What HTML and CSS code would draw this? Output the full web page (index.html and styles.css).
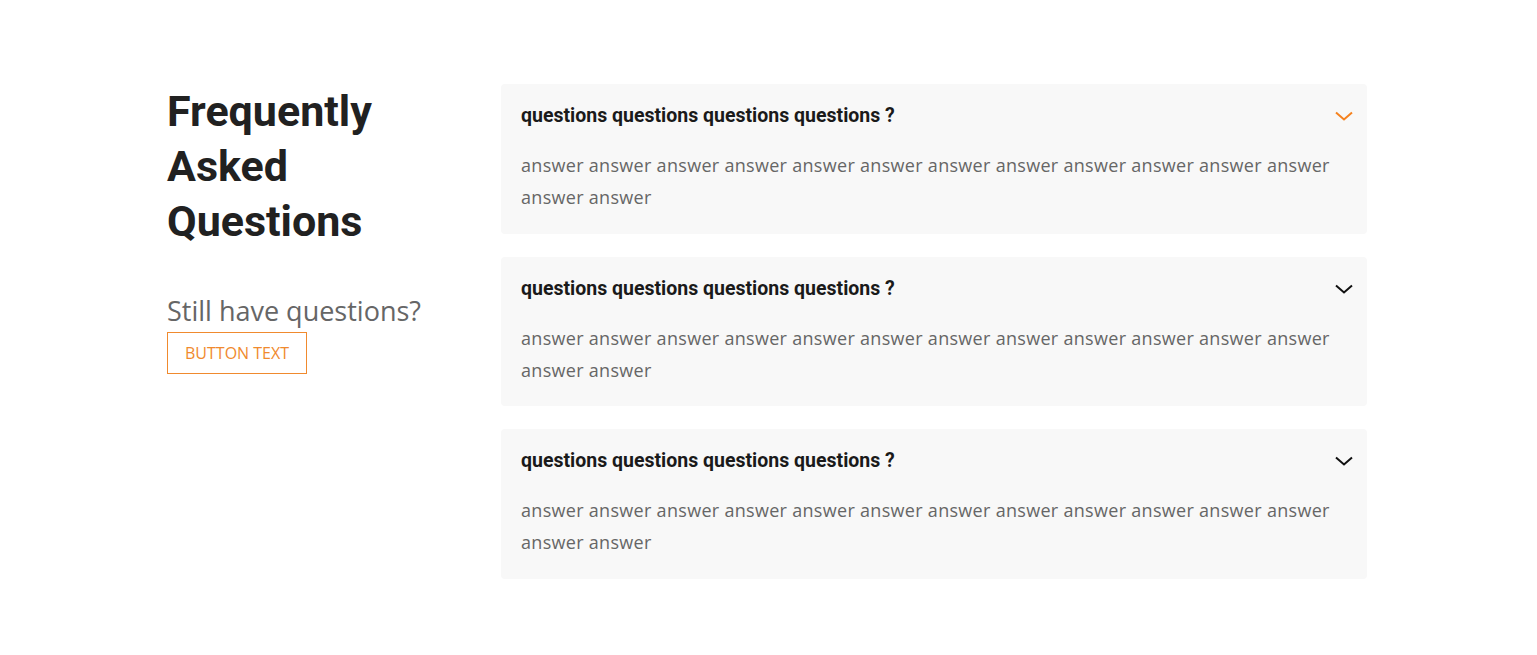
FILE: index.html
```html
<!DOCTYPE html>
<html lang="en">
<head>
<meta charset="utf-8">
<title>FAQ</title>
<link rel="stylesheet" href="styles.css">
</head>
<body>
<section class="faq">
  <div class="faq-intro">
    <h1 class="faq-title">Frequently Asked Questions</h1>
    <p class="faq-still">Still have questions?</p>
    <a class="faq-button" href="#">BUTTON TEXT</a>
  </div>
  <div class="faq-list">
    <div class="faq-item">
      <div class="faq-q">
        <span>questions questions questions questions ?</span>
        <svg class="chev chev-active" width="18" height="10" viewBox="0 0 18 10"><path d="M1 1.5 L9 8.5 L17 1.5" fill="none" stroke="currentColor" stroke-width="2"/></svg>
      </div>
      <p class="faq-a">answer answer answer answer answer answer answer answer answer answer answer answer answer answer</p>
    </div>
    <div class="faq-item">
      <div class="faq-q">
        <span>questions questions questions questions ?</span>
        <svg class="chev" width="18" height="10" viewBox="0 0 18 10"><path d="M1 1.5 L9 8.5 L17 1.5" fill="none" stroke="currentColor" stroke-width="2"/></svg>
      </div>
      <p class="faq-a">answer answer answer answer answer answer answer answer answer answer answer answer answer answer</p>
    </div>
    <div class="faq-item">
      <div class="faq-q">
        <span>questions questions questions questions ?</span>
        <svg class="chev" width="18" height="10" viewBox="0 0 18 10"><path d="M1 1.5 L9 8.5 L17 1.5" fill="none" stroke="currentColor" stroke-width="2"/></svg>
      </div>
      <p class="faq-a">answer answer answer answer answer answer answer answer answer answer answer answer answer answer</p>
    </div>
  </div>
</section>
</body>
</html>
```

FILE: styles.css
```css
html, body {
  margin: 0;
  padding: 0;
  background: #ffffff;
}

.faq {
  width: 1203px;
  margin: 0 auto;
  padding-top: 84px;
  display: grid;
  grid-template-columns: 334px 866px;
}

.faq-title {
  margin: 0;
  font-family: Roboto, "Liberation Sans", sans-serif;
  font-weight: 700;
  font-size: 43px;
  line-height: 55px;
  color: #212121;
  width: 250px;
}

.faq-still {
  margin: 47px 0 6px;
  font-family: "Open Sans", "Noto Sans", sans-serif;
  font-size: 27px;
  line-height: 30px;
  color: #666666;
}

.faq-button {
  display: inline-block;
  box-sizing: border-box;
  height: 42px;
  padding: 0 17px;
  border: 1px solid #f08a2e;
  color: #f08a2e;
  font-family: "Open Sans", "Noto Sans", sans-serif;
  font-size: 16px;
  line-height: 40px;
  text-decoration: none;
}

.faq-list {
  display: flex;
  flex-direction: column;
  gap: 23px;
}

.faq-item {
  background: #f8f8f8;
  padding: 21px 14px 20.5px 20px;
  border-radius: 4px;
}

.faq-q {
  display: flex;
  justify-content: space-between;
  align-items: center;
  font-family: Roboto, "Liberation Sans", sans-serif;
  font-weight: 700;
  font-size: 19.5px;
  line-height: 22px;
  color: #1a1a1a;
}

.chev {
  color: #111111;
}

.chev-active {
  color: #f5821f;
}

.faq-a {
  margin: 22px 0 0;
  font-family: "Open Sans", "Noto Sans", sans-serif;
  font-size: 18px;
  letter-spacing: 0.3px;
  line-height: 32px;
  color: #666666;
}
```
